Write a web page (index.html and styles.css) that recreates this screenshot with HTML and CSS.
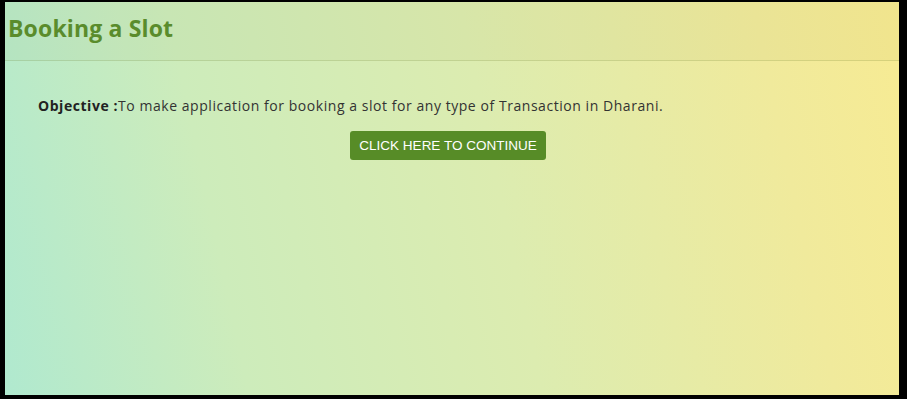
FILE: index.html
```html
<!DOCTYPE html>
<html>
<head>
<meta charset="utf-8">
<link rel="stylesheet" href="styles.css">
</head>
<body>
<div class="panel">
  <div class="panel-header">
    <h2 class="title">Booking a Slot</h2>
  </div>
  <div class="panel-body">
    <p class="objective"><b>Objective :</b>To make application for booking a slot for any type of Transaction in Dharani.</p>
    <div class="actions">
      <button class="btn">CLICK HERE TO CONTINUE</button>
    </div>
  </div>
</div>
</body>
</html>
```
FILE: styles.css
```css
html, body {
  margin: 0;
  height: 100%;
}
body {
  background: #000;
  box-sizing: border-box;
  padding: 2px 8px 4px 5px;
  display: flex;
  font-family: "Open Sans", "Liberation Sans", sans-serif;
}
.panel {
  flex: 1;
  display: flex;
  flex-direction: column;
  background: linear-gradient(78deg, #b0e9cf 0%, #cdecbb 25%, #dcecb0 55%, #f0ea9c 85%, #f7eb93 100%);
}
.panel-header {
  height: 59px;
  box-sizing: border-box;
  padding: 11px 0 0 3px;
  background: rgba(90, 90, 0, 0.035);
  border-bottom: 1px solid rgba(100, 120, 40, 0.18);
}
.title {
  margin: 0;
  font-size: 23px;
  line-height: 30px;
  letter-spacing: 0.15px;
  font-weight: 700;
  color: #5a8c2c;
}
.panel-body {
  padding: 36px 41px 0 33px;
}
.objective {
  margin: 0;
  font-size: 14px;
  letter-spacing: 0.55px;
  color: #333;
  line-height: 18px;
}
.objective b {
  color: #222;
}
.actions {
  text-align: center;
  margin-top: 16px;
}
.btn {
  font-family: "Liberation Sans", Arial, sans-serif;
  font-size: 13.5px;
  color: #fff;
  background: #578c27;
  border: none;
  border-radius: 3px;
  height: 29px;
  width: 196px;
  padding: 0;
}
```
